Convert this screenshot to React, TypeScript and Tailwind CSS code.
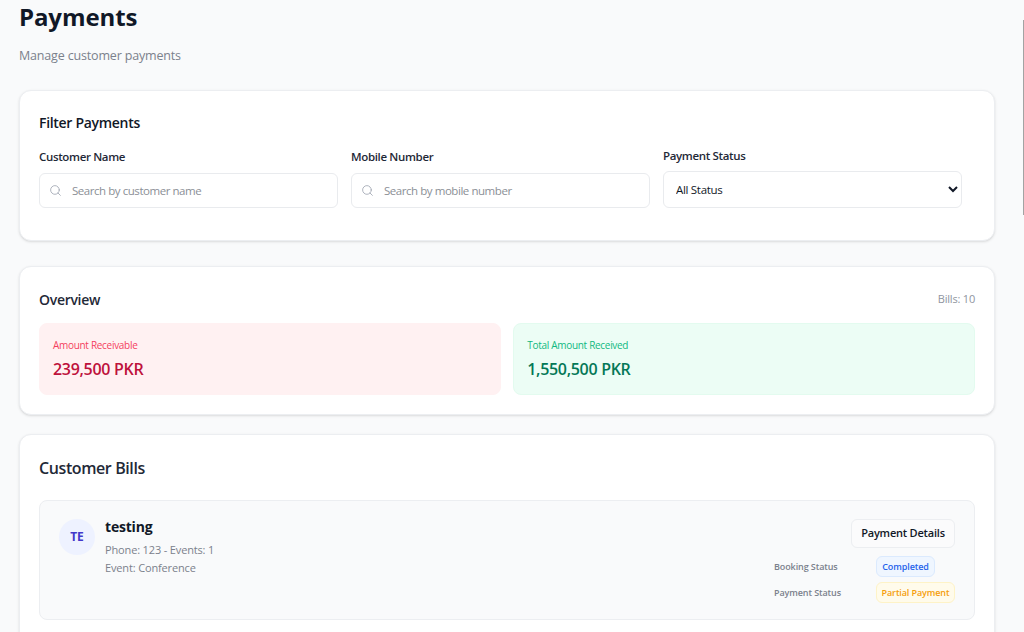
import React from 'react';
import { Search } from 'lucide-react';

const font = "font-['Open_Sans',sans-serif]";

// 頁面上的輸入欄位
const SearchField = ({ label, placeholder }: { label: string; placeholder: string }) => (
  <div className="w-[299px]">
    <label className="block text-[11.5px] tracking-[-0.35px] leading-[16px] font-semibold text-[#1f2937] mb-[8px]">{label}</label>
    <div className="relative">
      <Search className="absolute left-[10px] top-[11px] w-[13px] h-[13px] text-[#9ca3af]" strokeWidth={1.5} />
      <input
        readOnly
        placeholder={placeholder}
        className="w-full h-[35px] rounded-md border border-[#e9ebee] bg-white pl-[32px] pr-3 text-[11.5px] tracking-[-0.45px] placeholder:text-[#8b8f96] outline-none"
      />
    </div>
  </div>
);

const StatCard = ({ label, value, wrap, labelColor, valueColor }: { label: string; value: string; wrap: string; labelColor: string; valueColor: string }) => (
  <div className={`flex-1 h-[72px] rounded-lg border px-[13px] pt-[13px] ${wrap}`}>
    <p className={`text-[10px] tracking-[-0.3px] leading-[16px] ${labelColor}`}>{label}</p>
    <p className={`text-[16px] tracking-[-0.3px] leading-[24px] mt-[4px] font-semibold ${valueColor}`}>{value}</p>
  </div>
);

export default function App() {
  return (
    <div className={`relative h-[632px] overflow-hidden bg-[#f9fafb] pl-[19px] pr-[29px] ${font}`}>
      <h1 className="text-[24px] tracking-[-0.1px] leading-[34px] font-bold text-[#111827]">Payments</h1>
      <p className="text-[12.5px] tracking-[-0.17px] leading-[20px] text-[#7b818c] mt-[12px]">Manage customer payments</p>

      {/* 篩選 */}
      <section className="mt-[24px] h-[151px] rounded-xl border border-[#eceef1] bg-white shadow-sm px-[19px] pt-[21px]">
        <h2 className="text-[14px] tracking-[-0.3px] leading-[22px] font-semibold text-[#111827]">Filter Payments</h2>
        <div className="flex gap-[13px] items-end mt-[14px]">
          <SearchField label="Customer Name" placeholder="Search by customer name" />
          <SearchField label="Mobile Number" placeholder="Search by mobile number" />
          <div className="w-[299px]">
            <label className="block text-[11.5px] tracking-[-0.35px] leading-[16px] font-semibold text-[#1f2937] mb-[7px]">Payment Status</label>
            <select className="w-full h-[37px] rounded-md border border-[#e9ebee] bg-white pl-[8px] pr-2 text-[11.5px] tracking-[-0.3px] text-[#111827] outline-none">
              <option>All Status</option>
            </select>
          </div>
        </div>
      </section>

      {/* 總覽 */}
      <section className="mt-[25px] h-[149px] rounded-xl border border-[#eceef1] bg-white shadow-sm px-[19px] pt-[20px]">
        <div className="flex justify-between items-center h-[24px]">
          <h2 className="text-[14px] tracking-[-0.3px] font-semibold text-[#1f2937]">Overview</h2>
          <span className="text-[11px] tracking-[-0.2px] text-[#8f95a0]">Bills: 10</span>
        </div>
        <div className="flex gap-[12.5px] mt-[12px]">
          <StatCard label="Amount Receivable" value="239,500 PKR" wrap="bg-[#fff1f2] border-[#fff1f2]" labelColor="text-[#f43f5e]" valueColor="text-[#be123c]" />
          <StatCard label="Total Amount Received" value="1,550,500 PKR" wrap="bg-[#ecfdf5] border-[#e3fbef]" labelColor="text-[#10b981]" valueColor="text-[#047857]" />
        </div>
      </section>

      {/* 客戶帳單 */}
      <section className="mt-[19px] h-[260px] rounded-xl border border-[#eceef1] bg-white shadow-sm px-[19px] pt-[20px]">
        <h2 className="text-[16px] tracking-[-0.4px] leading-[26px] font-semibold text-[#1f2937]">Customer Bills</h2>
        <div className="mt-[19px] h-[120px] rounded-lg border border-[#eceef1] bg-[#f9fafb] flex justify-between pl-[19px] pr-[19px] pt-[18px]">
          <div className="flex gap-[10px]">
            <div className="w-[36px] h-[36px] rounded-full bg-[#eef2ff] flex items-center justify-center text-[12px] font-bold text-[#4338ca]">TE</div>
            <div>
              <p className="text-[14px] tracking-[-0.2px] leading-[16px] font-bold text-[#111827]">testing</p>
              <p className="text-[11px] tracking-[-0.15px] leading-[18px] text-[#7b818c] mt-[6px]">Phone: 123 - Events: 1</p>
              <p className="text-[11px] tracking-[-0.15px] leading-[18px] text-[#7b818c]">Event: Conference</p>
            </div>
          </div>
          <div className="flex flex-col items-end">
            <button className="h-[29px] w-[104px] rounded-md border border-[#eceef1] bg-[#fbfbfc] text-[11px] tracking-[-0.2px] font-semibold text-[#111827]">Payment Details</button>
            <div className="grid grid-cols-[102px_79px] gap-y-[5px] mt-[8px] items-center">
              <span className="text-[9px] tracking-[-0.1px] font-semibold text-[#7b818c]">Booking Status</span>
              <span className="justify-self-start h-[21px] w-[59px] flex items-center justify-center rounded-md border border-[#dbeafe] bg-[#eff6ff] text-[9px] tracking-[-0.1px] font-semibold text-[#2563eb]">Completed</span>
              <span className="text-[9px] tracking-[-0.1px] font-semibold text-[#7b818c]">Payment Status</span>
              <span className="justify-self-start h-[21px] w-[79px] flex items-center justify-center rounded-md border border-[#fef3c7] bg-[#fffbeb] text-[9px] tracking-[-0.1px] font-semibold text-[#f59e0b] whitespace-nowrap">Partial Payment</span>
            </div>
          </div>
        </div>
      </section>

      {/* 捲軸 */}
      <div className="absolute right-0 top-[20px] w-[1px] h-[195px] bg-[#a3a3a3]" />
    </div>
  );
}
